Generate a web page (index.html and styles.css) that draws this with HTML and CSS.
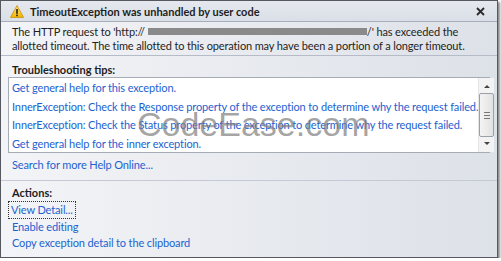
FILE: index.html
```html
<!DOCTYPE html>
<html>
<head>
<meta charset="utf-8">
<link rel="stylesheet" href="styles.css">
</head>
<body>
<div class="dialog">
  <div class="titlebar">
    <svg class="warn" width="14" height="13" viewBox="0 0 14 13">
      <defs>
        <linearGradient id="wg" x1="0" y1="0" x2="0" y2="1">
          <stop offset="0" stop-color="#ffe680"/>
          <stop offset="1" stop-color="#f2b600"/>
        </linearGradient>
      </defs>
      <path d="M7 0.6 L13.5 12.4 L0.5 12.4 Z" fill="url(#wg)" stroke="#c98d00" stroke-width="0.8" stroke-linejoin="round"/>
      <rect x="6.2" y="4" width="1.6" height="4.8" fill="#222"/>
      <rect x="6.2" y="9.6" width="1.6" height="1.6" fill="#222"/>
    </svg>
    <span class="title">TimeoutException was unhandled by user code</span>
    <svg class="close" width="9" height="9" viewBox="0 0 9 9">
      <path d="M1 1 L8 8 M8 1 L1 8" stroke="#2a2a2a" stroke-width="1.8"/>
    </svg>
  </div>
  <div class="message">
    <p>The HTTP request to 'http://<span class="blur"></span>/' has exceeded the</p>
    <p>allotted timeout. The time allotted to this operation may have been a portion of a longer timeout.</p>
  </div>
  <div class="tips">
    <div class="heading">Troubleshooting tips:</div>
    <div class="listbox">
      <ul class="items">
        <li>Get general help for this exception.</li>
        <li>InnerException: Check the Response property of the exception to determine why the request failed.</li>
        <li>InnerException: Check the Status property of the exception to determine why the request failed.</li>
        <li>Get general help for the inner exception.</li>
      </ul>
      <div class="scrollbar">
        <span class="arrow up"></span>
        <span class="thumb"><span class="grip"></span></span>
        <span class="arrow down"></span>
      </div>
    </div>
    <a class="link search">Search for more Help Online...</a>
  </div>
  <div class="actions">
    <div class="heading">Actions:</div>
    <a class="link focus">View Detail...</a>
    <a class="link">Enable editing</a>
    <a class="link">Copy exception detail to the clipboard</a>
  </div>
  <div class="watermark">CodeEase.com</div>
</div>
</body>
</html>
```

FILE: styles.css
```css
html, body {
  margin: 0;
  padding: 0;
  background: #ffffff;
}
body {
  font-family: Lato, "Noto Sans", sans-serif;
  font-size: 11px;
  letter-spacing: -0.13px;
  color: #1e1e1e;
}
.dialog {
  position: relative;
  width: 496px;
  height: 256px;
  border: 1px solid #55595f;
  box-shadow: 2px 2px 2px rgba(0,0,0,0.45);
  background: linear-gradient(to right, #f3f4f7, #dde1e8);
  display: flex;
  flex-direction: column;
  overflow: hidden;
}
.titlebar {
  height: 20px;
  display: flex;
  align-items: center;
  padding: 0 12px 0 9px;
  background: linear-gradient(to bottom, #e5e8ee, #dadee6);
  border-bottom: 1px solid #a7aebb;
}
.warn { flex: none; }
.title {
  font-weight: bold;
  letter-spacing: 0;
  margin-left: 6px;
  flex: 1;
}
.close { flex: none; }
.message {
  padding: 3px 11px 2px;
  border-bottom: 1px solid #b5bcc8;
  line-height: 14px;
}
.message p { margin: 0; white-space: nowrap; }
.blur {
  display: inline-block;
  width: 219px;
  height: 7px;
  margin-left: 3px;
  background: #8a8a8a;
  vertical-align: 1px;
}
.tips {
  display: flex;
  flex-direction: column;
  padding: 7px 0 0;
}
.heading {
  font-weight: bold;
  letter-spacing: 0;
  padding-left: 11px;
  line-height: 14px;
}
.listbox {
  margin: 0 7px 0 7px;
  height: 74px;
  border: 1px solid #a5acb5;
  background: #fff;
  display: flex;
}
.items {
  list-style: none;
  margin: 0;
  padding: 1px 0 0 3px;
  flex: 1;
}
.items li {
  color: #1c62d0;
  line-height: 18.5px;
  white-space: nowrap;
}
.scrollbar {
  width: 16px;
  display: flex;
  flex-direction: column;
  align-items: center;
  background: #f3f3f3;
  border-left: 1px solid #e6e6e6;
}
.arrow {
  width: 0; height: 0;
  border-left: 3px solid transparent;
  border-right: 3px solid transparent;
  margin: 7px 0 5px;
}
.arrow.up { border-bottom: 3px solid #444; }
.arrow.down { border-top: 3px solid #444; margin: 5px 0 7px; }
.thumb {
  flex: 1;
  width: 13px;
  border: 1px solid #9aa0a8;
  border-radius: 2px;
  background: linear-gradient(to right, #f4f4f4, #e2e2e2);
  display: flex;
  align-items: center;
  justify-content: center;
}
.grip {
  width: 6px;
  height: 5px;
  border-top: 1px solid #777;
  border-bottom: 1px solid #777;
  position: relative;
}
.grip::after {
  content: "";
  position: absolute;
  left: 0; right: 0; top: 2px;
  border-top: 1px solid #777;
}
.link {
  color: #1c62d0;
  line-height: 16px;
  display: block;
  white-space: nowrap;
}
.search {
  padding-left: 11px;
  margin: 4px 0 7px;
}
.actions {
  border-top: 1px solid #c3cad5;
  padding: 5px 0 0;
  display: flex;
  flex-direction: column;
  align-items: flex-start;
}
.actions .heading { margin-bottom: 2px; }
.actions .link { margin-left: 11px; }
.actions .focus {
  outline: 1px dotted #333;
  outline-offset: 0;
  padding: 0 2px;
  margin-left: 8px;
  margin-bottom: 1px;
}
.watermark {
  position: absolute;
  left: 136px;
  top: 104px;
  font-family: "Liberation Sans", Arial, sans-serif;
  font-size: 34px;
  letter-spacing: 0;
  color: rgba(125,125,125,0.7);
  pointer-events: none;
}
```
